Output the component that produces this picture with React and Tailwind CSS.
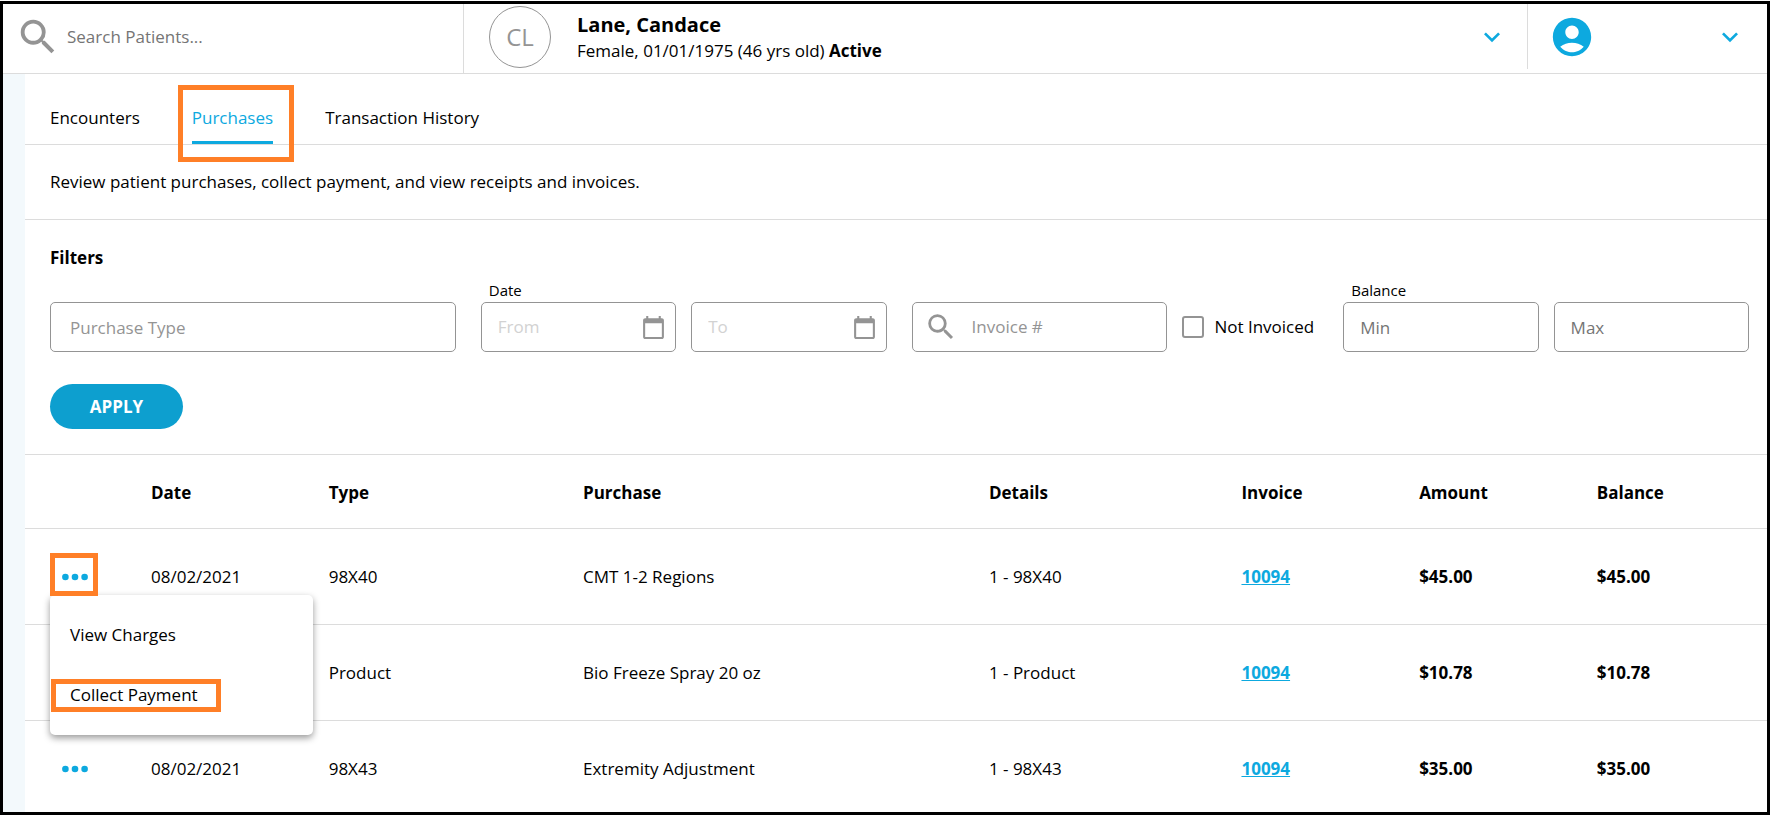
import React from "react";
import { MdSearch, MdExpandMore, MdAccountCircle, MdCalendarToday } from "react-icons/md";

const rows = [
  { date: "08/02/2021", type: "98X40", purchase: "CMT 1-2 Regions", details: "1 - 98X40", invoice: "10094", amount: "$45.00", balance: "$45.00", open: true },
  { date: "08/02/2021", type: "Product", purchase: "Bio Freeze Spray 20 oz", details: "1 - Product", invoice: "10094", amount: "$10.78", balance: "$10.78" },
  { date: "08/02/2021", type: "98X43", purchase: "Extremity Adjustment", details: "1 - 98X43", invoice: "10094", amount: "$35.00", balance: "$35.00" },
];

const fieldBox = "flex h-[50px] w-full min-w-0 items-center rounded-[5px] border border-[#949494] bg-white";

function Highlight({ className }) {
  return <span aria-hidden="true" className={`pointer-events-none absolute border-[5px] border-[#ff7f27] ${className}`} />;
}

function Header() {
  return (
    <header className="flex h-[70px] border-b border-[#dcdcdc]">
      <label className="flex w-[461px] shrink-0 items-center border-r border-[#dcdcdc] pb-1 pl-3">
        <MdSearch className="size-[46px] shrink-0 text-[#949494]" />
        <input
          type="text"
          aria-label="Search Patients"
          placeholder="Search Patients..."
          className="ml-1.5 min-w-0 flex-1 outline-none placeholder:text-[#757575]"
        />
      </label>
      <div className="mb-1 flex min-w-0 flex-1 items-center border-r border-[#dcdcdc] pl-[25px] pr-[19px]">
        <div className="flex size-[62px] shrink-0 items-center justify-center rounded-full border border-[#949494] text-2xl text-[#949494]">
          CL
        </div>
        <div className="ml-[26px] flex-1 pt-0.5">
          <h1 className="text-xl leading-[26px] font-bold">Lane, Candace</h1>
          <p className="leading-[26px]">
            Female, 01/01/1975 (46 yrs old) <strong className="font-bold">Active</strong>
          </p>
        </div>
        <button type="button" aria-label="Patient details">
          <MdExpandMore className="size-8 text-[#0da9df]" />
        </button>
      </div>
      <div className="mb-1 flex w-[239px] shrink-0 items-center justify-between pl-[21px] pr-[21px]">
        <MdAccountCircle className="size-[46px] text-[#0da9df]" />
        <button type="button" aria-label="Account menu">
          <MdExpandMore className="size-8 text-[#0da9df]" />
        </button>
      </div>
    </header>
  );
}

function DateField({ id, placeholder }) {
  return (
    <div className={fieldBox}>
      <input
        id={id}
        type="text"
        aria-label={`Date ${placeholder}`}
        placeholder={placeholder}
        className="min-w-0 flex-1 pl-4 outline-none placeholder:text-[#d2d2d2]"
      />
      <button type="button" aria-label={`Pick ${placeholder} date`} className="mr-[9px]">
        <MdCalendarToday className="size-[25px] text-[#949494]" />
      </button>
    </div>
  );
}

function Filters() {
  return (
    <form className="border-b border-[#dcdcdc] pt-[26px] pb-[25px] pl-[25px] pr-[18px]" onSubmit={(e) => e.preventDefault()}>
      <h2 className="font-bold">Filters</h2>
      <div className="mt-2.5 flex items-end">
        <div className="min-w-0 flex-[406_1_0%]">
          <input
            type="text"
            aria-label="Purchase Type"
            placeholder="Purchase Type"
            className={`${fieldBox} px-[19px] outline-none placeholder:text-[#949494]`}
          />
        </div>
        <div className="ml-[25px] min-w-0 flex-[406_1_0%]">
          <label htmlFor="date-from" className="mb-0.5 block pl-2 text-[15px] leading-5">Date</label>
          <div className="flex gap-[15px]">
            <DateField id="date-from" placeholder="From" />
            <DateField id="date-to" placeholder="To" />
          </div>
        </div>
        <div className="ml-[25px] min-w-0 flex-[256_1_0%]">
          <label className={fieldBox}>
            <MdSearch className="ml-[11px] size-[34px] shrink-0 text-[#949494]" />
            <input
              type="text"
              aria-label="Invoice #"
              placeholder="Invoice #"
              className="ml-[14px] min-w-0 flex-1 outline-none placeholder:text-[#949494]"
            />
          </label>
        </div>
        <label className="ml-[15px] flex h-[50px] shrink-0 items-center gap-2.5 pr-1">
          <input type="checkbox" className="size-[22px] appearance-none rounded-[3px] border-2 border-[#949494] bg-white" />
          <span>Not Invoiced</span>
        </label>
        <div className="ml-[25px] min-w-0 flex-[406_1_0%]">
          <label htmlFor="balance-min" className="mb-0.5 block pl-2 text-[15px] leading-5">Balance</label>
          <div className="flex gap-[15px]">
            <input id="balance-min" type="text" placeholder="Min" className={`${fieldBox} px-4 outline-none placeholder:text-[#757575]`} />
            <input type="text" aria-label="Balance Max" placeholder="Max" className={`${fieldBox} px-4 outline-none placeholder:text-[#757575]`} />
          </div>
        </div>
      </div>
      <button type="submit" className="mt-8 block h-[45px] w-[133px] rounded-full bg-[#0d9fcf] font-bold text-white">
        APPLY
      </button>
    </form>
  );
}

function RowMenu() {
  return (
    <div role="menu" className="absolute left-[25px] top-[66px] z-10 w-[263px] rounded-[5px] bg-white py-2.5 shadow-[0_3px_7px_rgba(0,0,0,0.4)]">
      <button type="button" role="menuitem" className="block h-[60px] w-full px-5 text-left">View Charges</button>
      <button type="button" role="menuitem" className="relative block h-[60px] w-full px-5 text-left">
        Collect Payment
        <Highlight className="left-px top-[14px] h-[33px] w-[170px]" />
      </button>
    </div>
  );
}

function PurchasesTable() {
  return (
    <table className="w-full table-fixed text-left">
      <colgroup>
        <col className="w-[126px]" />
        <col className="w-[10.2%]" />
        <col className="w-[14.6%]" />
        <col className="w-[23.3%]" />
        <col className="w-[14.5%]" />
        <col className="w-[10.2%]" />
        <col className="w-[10.2%]" />
        <col />
      </colgroup>
      <thead>
        <tr className="h-[73px] border-b border-[#dcdcdc]">
          <th aria-label="Actions" />
          {["Date", "Type", "Purchase", "Details", "Invoice", "Amount", "Balance"].map((h) => (
            <th key={h} className="pt-1 font-bold">{h}</th>
          ))}
        </tr>
      </thead>
      <tbody className="[&_td]:pt-9 [&_td]:pb-[35px] [&>tr:last-child>td]:pb-7">
        {rows.map((r, i) => (
          <tr key={i} className="border-[#dcdcdc] not-last:border-b">
            <td className="relative pl-[31px]">
              <button type="button" aria-label="Row actions" className="block h-6 px-1.5">
                <svg viewBox="0 0 26 8" className="h-2 w-[26px] fill-[#0da9df]">
                  <circle cx="3.4" cy="4" r="3.3" />
                  <circle cx="13" cy="4" r="3.3" />
                  <circle cx="22.6" cy="4" r="3.3" />
                </svg>
              </button>
              {r.open && <RowMenu />}
              {r.open && <Highlight className="left-[25px] top-6 z-20 h-[43px] w-12" />}
            </td>
            <td>{r.date}</td>
            <td>{r.type}</td>
            <td>{r.purchase}</td>
            <td>{r.details}</td>
            <td>
              <a href="#invoice" className="font-bold text-[#0da9df] underline">{r.invoice}</a>
            </td>
            <td className="font-bold">{r.amount}</td>
            <td className="font-bold">{r.balance}</td>
          </tr>
        ))}
      </tbody>
    </table>
  );
}

export default function App() {
  return (
    <div className="flex min-h-screen flex-col bg-white pt-px pr-px font-['Open_Sans',sans-serif] text-[17px] leading-6 text-black">
      <div className="flex flex-1 flex-col border-[3px] border-black">
        <Header />
        <div className="flex flex-1">
          <div className="w-[22px] shrink-0 bg-[#f3f9fc]" />
          <main className="min-w-0 flex-1">
            <nav className="flex h-[71px] gap-[52px] border-b border-[#dcdcdc] pl-[25px]">
              <a href="#encounters" className="flex items-center border-b-3 border-transparent pt-5">
                Encounters
              </a>
              <a href="#purchases" aria-current="page" className="relative flex items-center border-b-3 border-[#0da9df] pt-5 text-[#0da9df]">
                Purchases
                <Highlight className="-bottom-[21px] -left-[14px] -right-[21px] top-[11px]" />
              </a>
              <a href="#history" className="flex items-center border-b-3 border-transparent pt-5">
                Transaction History
              </a>
            </nav>
            <p className="border-b border-[#dcdcdc] pt-[25px] pb-[25px] pl-[25px]">
              Review patient purchases, collect payment, and view receipts and invoices.
            </p>
            <Filters />
            <PurchasesTable />
          </main>
        </div>
      </div>
    </div>
  );
}
